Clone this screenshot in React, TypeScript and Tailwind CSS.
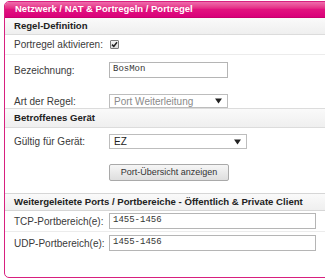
import React from "react";

const labelCls = "w-[95px] shrink-0 text-[10px] text-[#3a3a3a]";
const sectionCls =
  "flex items-center pl-[9px] bg-gradient-to-b from-[#fafafa] to-[#efefef] text-[9.6px] font-bold text-[#222]";

function Arrow() {
  return (
    <svg width="7" height="6" viewBox="0 0 7 6" className="shrink-0">
      <path d="M0 0.5 L7 0.5 L3.5 5.5 Z" fill="#222" />
    </svg>
  );
}

export default function App() {
  return (
    <div
      className="w-[325px] h-[280px] overflow-hidden bg-white pt-[1px] pl-[4px]"
      style={{ fontFamily: '"Liberation Sans", Arial, sans-serif' }}
    >
      <div className="w-[345px] h-[277px] border border-[#d8207f] rounded-[5px] overflow-hidden flex flex-col">
        {/* Title bar */}
        <div className="h-[16px] shrink-0 flex items-center pl-[10px] bg-gradient-to-b from-[#ee6aab] via-[#e2127f] to-[#d9007a] text-white text-[9.5px] font-bold border-b border-[#c8006c]">
          Netzwerk / NAT &amp; Portregeln / Portregel
        </div>

        {/* Regel-Definition */}
        <div className={`h-[17px] shrink-0 border-b border-[#dcdcdc] ${sectionCls}`}>
          Regel-Definition
        </div>

        <div className="h-[20px] shrink-0 flex items-center pl-[9px] border-b border-[#ececec]">
          <span className={labelCls}>Portregel aktivieren:</span>
          <span className="ml-[1px] w-[9px] h-[9px] border border-[#7a7a7a] rounded-[1px] bg-gradient-to-b from-[#f4f4f4] to-[#dcdcdc] flex items-center justify-center">
            <svg width="7" height="7" viewBox="0 0 7 7">
              <path d="M1 3.6 L2.8 5.4 L6 1.2" stroke="#222" strokeWidth="1.5" fill="none" />
            </svg>
          </span>
        </div>

        <div className="h-[30px] shrink-0 flex items-center pl-[9px]">
          <span className={labelCls}>Bezeichnung:</span>
          <div className="w-[119px] h-[16px] border border-[#b5b5b5] bg-white flex items-center pl-[3px] text-[9px] text-[#333]" style={{ fontFamily: '"Liberation Mono", "Courier New", monospace' }}>
            BosMon
          </div>
        </div>

        <div className="h-[23px] shrink-0 flex items-center pl-[9px] pt-[9px]">
          <span className={labelCls}>Art der Regel:</span>
          <div className="w-[119px] h-[14px] border border-[#bdbdbd] bg-white flex items-center justify-between pl-[4px] pr-[5px] text-[10px] text-[#8a8a8a]">
            <span>Port Weiterleitung</span>
            <Arrow />
          </div>
        </div>

        {/* Betroffenes Gerät */}
        <div className={`h-[20px] shrink-0 border-t border-b border-[#dcdcdc] ${sectionCls}`}>
          Betroffenes Gerät
        </div>

        <div className="h-[27px] shrink-0 flex items-center pl-[9px]">
          <span className={labelCls}>Gültig für Gerät:</span>
          <div className="w-[138px] h-[15px] border border-[#bdbdbd] bg-white flex items-center justify-between pl-[4px] pr-[5px] text-[10px] text-[#222]">
            <span>EZ</span>
            <Arrow />
          </div>
        </div>

        <div className="h-[38px] shrink-0 flex items-start pt-[9px] pl-[104px]">
          <div className="w-[120px] h-[17px] border border-[#a9a9a9] rounded-[2px] bg-gradient-to-b from-[#f6f6f6] to-[#dedede] flex items-center justify-center text-[9px] text-[#333]">
            Port-Übersicht anzeigen
          </div>
        </div>

        {/* Weitergeleitete Ports */}
        <div className={`h-[18px] shrink-0 border-t border-b border-[#d6d6d6] ${sectionCls}`}>
          Weitergeleitete Ports / Portbereiche - Öffentlich &amp; Private Client
        </div>

        <div className="h-[21px] shrink-0 flex items-center pl-[9px] border-b border-[#ececec]">
          <span className={labelCls}>TCP-Portbereich(e):</span>
          <div className="w-[207px] h-[16px] border border-[#b5b5b5] bg-white flex items-center pl-[3px] text-[9px] text-[#333]" style={{ fontFamily: '"Liberation Mono", "Courier New", monospace' }}>
            1455-1456
          </div>
        </div>

        <div className="h-[22px] shrink-0 flex items-center pl-[9px]">
          <span className={labelCls}>UDP-Portbereich(e):</span>
          <div className="w-[207px] h-[16px] border border-[#b5b5b5] bg-white flex items-center pl-[3px] text-[9px] text-[#333]" style={{ fontFamily: '"Liberation Mono", "Courier New", monospace' }}>
            1455-1456
          </div>
        </div>

        <div className="flex-1" />
      </div>
    </div>
  );
}
